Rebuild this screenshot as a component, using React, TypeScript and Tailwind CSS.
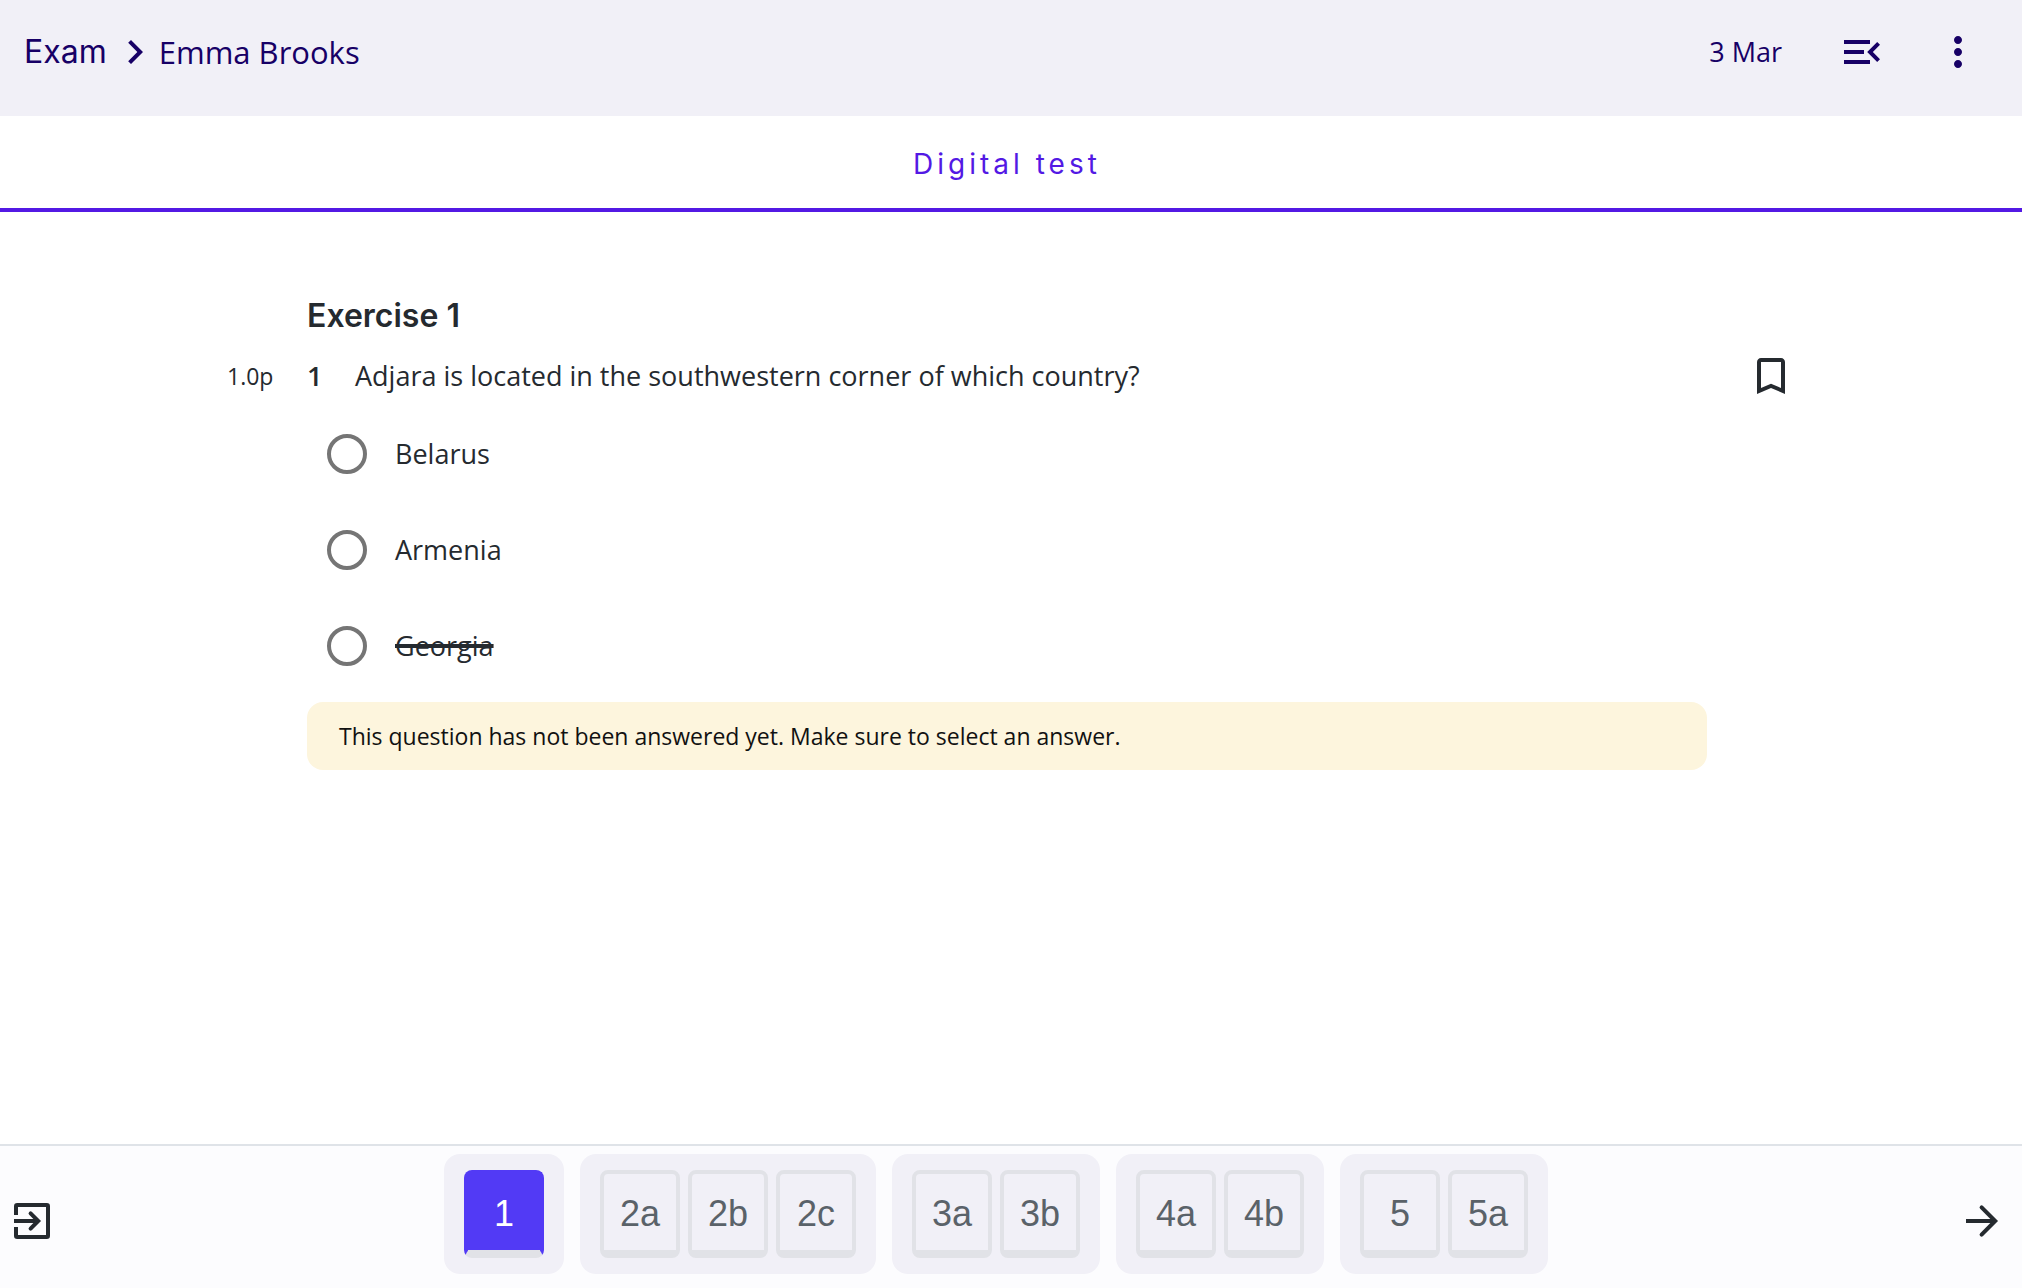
import React, { useState } from 'react';
import clsx from 'clsx';
import { MdBookmarkBorder, MdChevronRight, MdMenuOpen, MdMoreVert } from 'react-icons/md';

const options = [
  { id: 'belarus', label: 'Belarus', crossed: false },
  { id: 'armenia', label: 'Armenia', crossed: false },
  { id: 'georgia', label: 'Georgia', crossed: true },
];

const exercises = [['1'], ['2a', '2b', '2c'], ['3a', '3b'], ['4a', '4b'], ['5', '5a']];

const ExitIcon = () => (
  <svg viewBox="0 0 24 24" className="size-12" fill="none" stroke="currentColor" strokeWidth="2">
    <path d="M4 9V4.6a.6.6 0 0 1 .6-.6h14.8a.6.6 0 0 1 .6.6v14.8a.6.6 0 0 1-.6.6H4.6a.6.6 0 0 1-.6-.6V15" />
    <path d="M3 12h12" />
    <path d="M11.3 8.2 15.1 12l-3.8 3.8" strokeLinecap="round" />
  </svg>
);

const ForwardIcon = () => (
  <svg viewBox="0 0 24 24" className="size-12" fill="none" stroke="currentColor" strokeWidth="2">
    <path d="M4 12h14" />
    <path d="M11.8 5.2 18.6 12l-6.8 6.8" strokeLinecap="round" />
  </svg>
);

const Header = () => {
  return (
    <header className="flex h-[116px] items-center justify-between bg-[#f1f0f7] pr-10 pb-3 pl-6 text-[#170066]">
      <div className="flex items-center">
        <a href="#exam" className="mr-1 font-['Inter',sans-serif] text-[32px]">
          Exam
        </a>
        <MdChevronRight className="size-12" />
        <span className="text-[31px]">Emma Brooks</span>
      </div>
      <div className="flex items-center gap-12">
        <span className="mr-2 text-[27px]">3 Mar</span>
        <button type="button" aria-label="Open menu">
          <MdMenuOpen className="size-12" />
        </button>
        <button type="button" aria-label="More options">
          <MdMoreVert className="size-12" />
        </button>
      </div>
    </header>
  );
};

const Question = () => {
  const [answer, setAnswer] = useState('');

  return (
    <main className="grid flex-1 grid-cols-[80px_minmax(0,1400px)_88px] content-start justify-center pt-[84px]">
      <h1 className="col-start-2 mb-4 font-['Inter',sans-serif] text-[32px] leading-10 font-semibold">
        Exercise 1
      </h1>

      <span className="col-start-1 self-center text-[23px]">1.0p</span>
      <div className="flex items-center text-[27px]">
        <span className="w-12 shrink-0 font-semibold">1</span>
        <p id="question">Adjara is located in the southwestern corner of which country?</p>
      </div>
      <button type="button" aria-label="Bookmark" className="ml-10 justify-self-start">
        <MdBookmarkBorder className="size-12" />
      </button>

      <div role="radiogroup" aria-labelledby="question" className="col-start-2 mt-1.5">
        {options.map((option) => (
          <label
            key={option.id}
            htmlFor={option.id}
            className="flex h-24 items-center gap-7 pl-5 text-[27px]"
          >
            <input
              type="radio"
              id={option.id}
              name="answer"
              checked={answer === option.id}
              onChange={() => setAnswer(option.id)}
              className="size-10 shrink-0 appearance-none rounded-full border-4 border-[#757575] checked:border-12 checked:border-[#523af5]"
            />
            <span className={clsx(option.crossed && 'line-through decoration-4')}>
              {option.label}
            </span>
          </label>
        ))}
      </div>

      <p className="col-start-2 mt-2 rounded-2xl bg-[#fdf5dd] px-8 py-4 text-[23px] leading-9 text-[#111111]">
        This question has not been answered yet. Make sure to select an answer.
      </p>
    </main>
  );
};

const Footer = () => {
  const [current, setCurrent] = useState('1');

  return (
    <footer className="flex border-t-2 border-[#dfe3e8] bg-[#fcfcfe]">
      <button type="button" aria-label="Hand in" className="pt-2 pl-2">
        <ExitIcon />
      </button>
      <nav className="flex flex-1 justify-center gap-4 pt-2 pb-3.5 font-['Liberation_Sans',sans-serif]">
        {exercises.map((questions) => (
          <div key={questions[0]} className="flex gap-2 rounded-2xl bg-[#f1f0f7] px-5 py-4">
            {questions.map((question) => (
              <button
                key={question}
                type="button"
                onClick={() => setCurrent(question)}
                className={clsx(
                  'h-[88px] w-20 rounded-lg border-4 border-b-8 border-[#e1e2e7] pt-1 text-4xl',
                  current === question
                    ? 'border-x-[#523af5] border-t-[#523af5] bg-[#523af5] text-white'
                    : 'text-[#5a6269]'
                )}
              >
                {question}
              </button>
            ))}
          </div>
        ))}
      </nav>
      <button type="button" aria-label="Next question" className="pt-2 pr-4 pl-[22px]">
        <ForwardIcon />
      </button>
    </footer>
  );
};

const App = () => {
  return (
    <div className="flex min-h-screen flex-col bg-white font-['Open_Sans',sans-serif] text-[#252a2f]">
      <Header />
      <div className="flex h-24 items-center justify-center border-b-4 border-[#5319e4] pt-1 pr-2">
        <h2 className="font-['Inter',sans-serif] text-[28px] tracking-[4px] text-[#5319e4]">
          Digital test
        </h2>
      </div>
      <Question />
      <Footer />
    </div>
  );
};

export default App;
